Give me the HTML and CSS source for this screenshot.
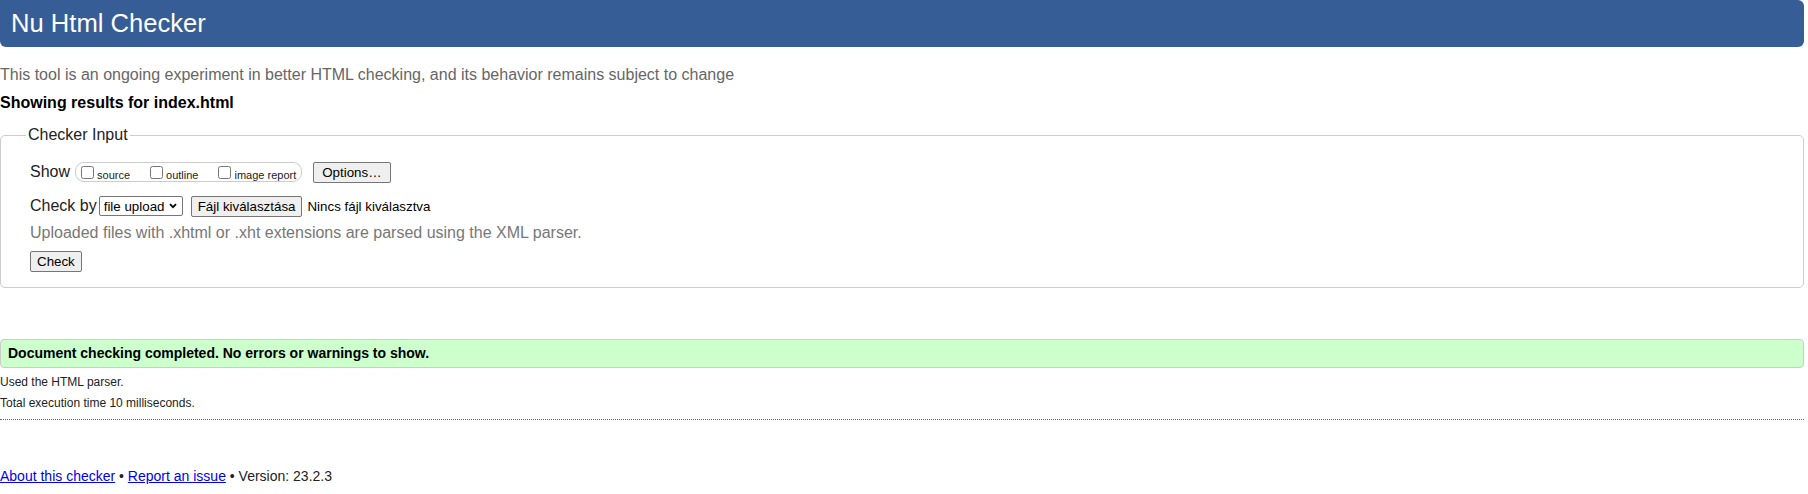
FILE: index.html
```html
<!DOCTYPE html>
<html lang="en">
<head>
<meta charset="utf-8">
<title>Nu Html Checker</title>
<link rel="stylesheet" href="styles.css">
</head>
<body>
<h1 class="title">Nu Html Checker</h1>
<p class="intro">This tool is an ongoing experiment in better HTML checking, and its behavior remains subject to change</p>
<p class="showing">Showing results for index.html</p>
<form class="checker">
  <fieldset class="input-box">
    <legend class="input-legend">Checker Input</legend>
    <div class="row row-show">
      <span class="row-label">Show</span>
      <span class="show-group">
        <label class="opt"><input type="checkbox" class="cb"><span class="opt-text">source</span></label>
        <label class="opt"><input type="checkbox" class="cb"><span class="opt-text">outline</span></label>
        <label class="opt"><input type="checkbox" class="cb"><span class="opt-text">image report</span></label>
      </span>
      <button type="button" class="btn btn-options">Options…</button>
    </div>
    <div class="row row-by">
      <span class="row-label">Check by</span>
      <span class="select-wrap">
        <select class="sel"><option>file upload</option></select>
        <svg class="chev" width="8" height="6" viewBox="0 0 8 6"><path d="M1 1.2 L4 4.2 L7 1.2" fill="none" stroke="#000" stroke-width="1.8"/></svg>
      </span>
      <button type="button" class="btn btn-file">Fájl kiválasztása</button>
      <span class="nofile">Nincs fájl kiválasztva</span>
    </div>
    <p class="hint">Uploaded files with .xhtml or .xht extensions are parsed using the XML parser.</p>
    <div class="row row-submit"><button type="button" class="btn">Check</button></div>
  </fieldset>
</form>
<p class="success">Document checking completed. No errors or warnings to show.</p>
<p class="stats stats-first">Used the HTML parser.</p>
<p class="stats">Total execution time 10 milliseconds.</p>
<hr class="sep">
<p class="footer"><a href="#" class="link">About this checker</a> • <a href="#" class="link">Report an issue</a> • Version: 23.2.3</p>
</body>
</html>
```
FILE: styles.css
```css
html, body {
  background: #fff;
}
body {
  margin: 0 4px 0 0;
  font-family: "Liberation Sans", Arial, sans-serif;
  color: #000;
}
.title {
  margin: 0;
  height: 47px;
  line-height: 47px;
  padding: 0 11px;
  font-size: 25.6px;
  font-weight: normal;
  color: #fff;
  background: #365d95;
  border-radius: 0 6px 6px 6px;
}
.intro {
  margin: 19px 0 0;
  font-size: 16px;
  line-height: 18px;
  color: #666;
}
.showing {
  margin: 10px 0 0;
  font-size: 16px;
  line-height: 18px;
  font-weight: bold;
  color: #000;
}
.checker {
  margin: 14px 0 0;
}
.input-box {
  margin: 0;
  padding: 17px 0 15px 29px;
  border: 1px solid #ccc;
  border-radius: 5px;
  min-width: 0;
}
.input-legend {
  margin-left: -4px;
  padding: 0 2px;
  font-size: 16px;
  line-height: 18px;
  color: #222;
}
.row {
  display: flex;
  align-items: center;
  height: 22px;
}
.row-label {
  font-size: 16px;
  line-height: 18px;
  color: #222;
}
.show-group {
  display: inline-flex;
  align-items: center;
  height: 18px;
  margin-left: 5px;
  padding: 0 1px;
  border: 1px solid #ccc;
  border-radius: 9px;
}
.opt {
  display: inline-flex;
  align-items: flex-end;
  margin-right: 16px;
}
.opt:last-child {
  margin-right: 4px;
}
.cb {
  width: 13px;
  height: 13px;
  margin: 0 3px 0 4px;
}
.opt-text {
  font-size: 11px;
  line-height: 11px;
  margin-bottom: -2px;
  color: #222;
}
.btn {
  font-family: "Liberation Sans", Arial, sans-serif;
  font-size: 13.333px;
  line-height: 17px;
  height: 21px;
  padding: 1px 6px;
  color: #000;
  background: #efefef;
  border: 1px solid #767676;
  border-radius: 2px;
  box-sizing: border-box;
}
.btn-options {
  margin-left: 11px;
  padding: 1px 8px;
}
.select-wrap {
  position: relative;
  display: inline-block;
  margin-left: 2px;
  height: 20px;
}
.sel {
  -webkit-appearance: none;
  appearance: none;
  width: 84px;
  height: 20px;
  margin: 0;
  padding: 0 0 0 4px;
  font-family: "Liberation Sans", Arial, sans-serif;
  font-size: 13.333px;
  color: #000;
  background: #fff;
  border: 1px solid #767676;
  border-radius: 2px;
}
.chev {
  position: absolute;
  left: 70px;
  top: 7px;
  pointer-events: none;
}
.btn-file {
  margin-left: 8px;
}
.nofile {
  margin-left: 5px;
  font-size: 13.333px;
  color: #000;
}
.row-by {
  margin-top: 12px;
}
.hint {
  margin: 7px 0 0;
  font-size: 16px;
  line-height: 18px;
  color: #777;
}
.row-submit {
  margin-top: 9px;
  height: 21px;
}
.success {
  margin: 51px 0 0;
  padding: 0 7px;
  height: 27px;
  line-height: 27px;
  font-size: 14px;
  font-weight: bold;
  color: #000;
  background: #ccffcc;
  border: 1px solid #ccc;
  border-radius: 4px;
}
.stats {
  margin: 7px 0 0;
  font-size: 12px;
  line-height: 14px;
  color: #222;
}
.sep {
  margin: 9px 0 0;
  height: 0;
  border: 0;
  border-top: 1px dotted #666;
}
.footer {
  margin: 48px 0 0;
  font-size: 14px;
  line-height: 16px;
  color: #222;
}
.link {
  color: #0000ee;
  text-decoration: underline;
}
```
